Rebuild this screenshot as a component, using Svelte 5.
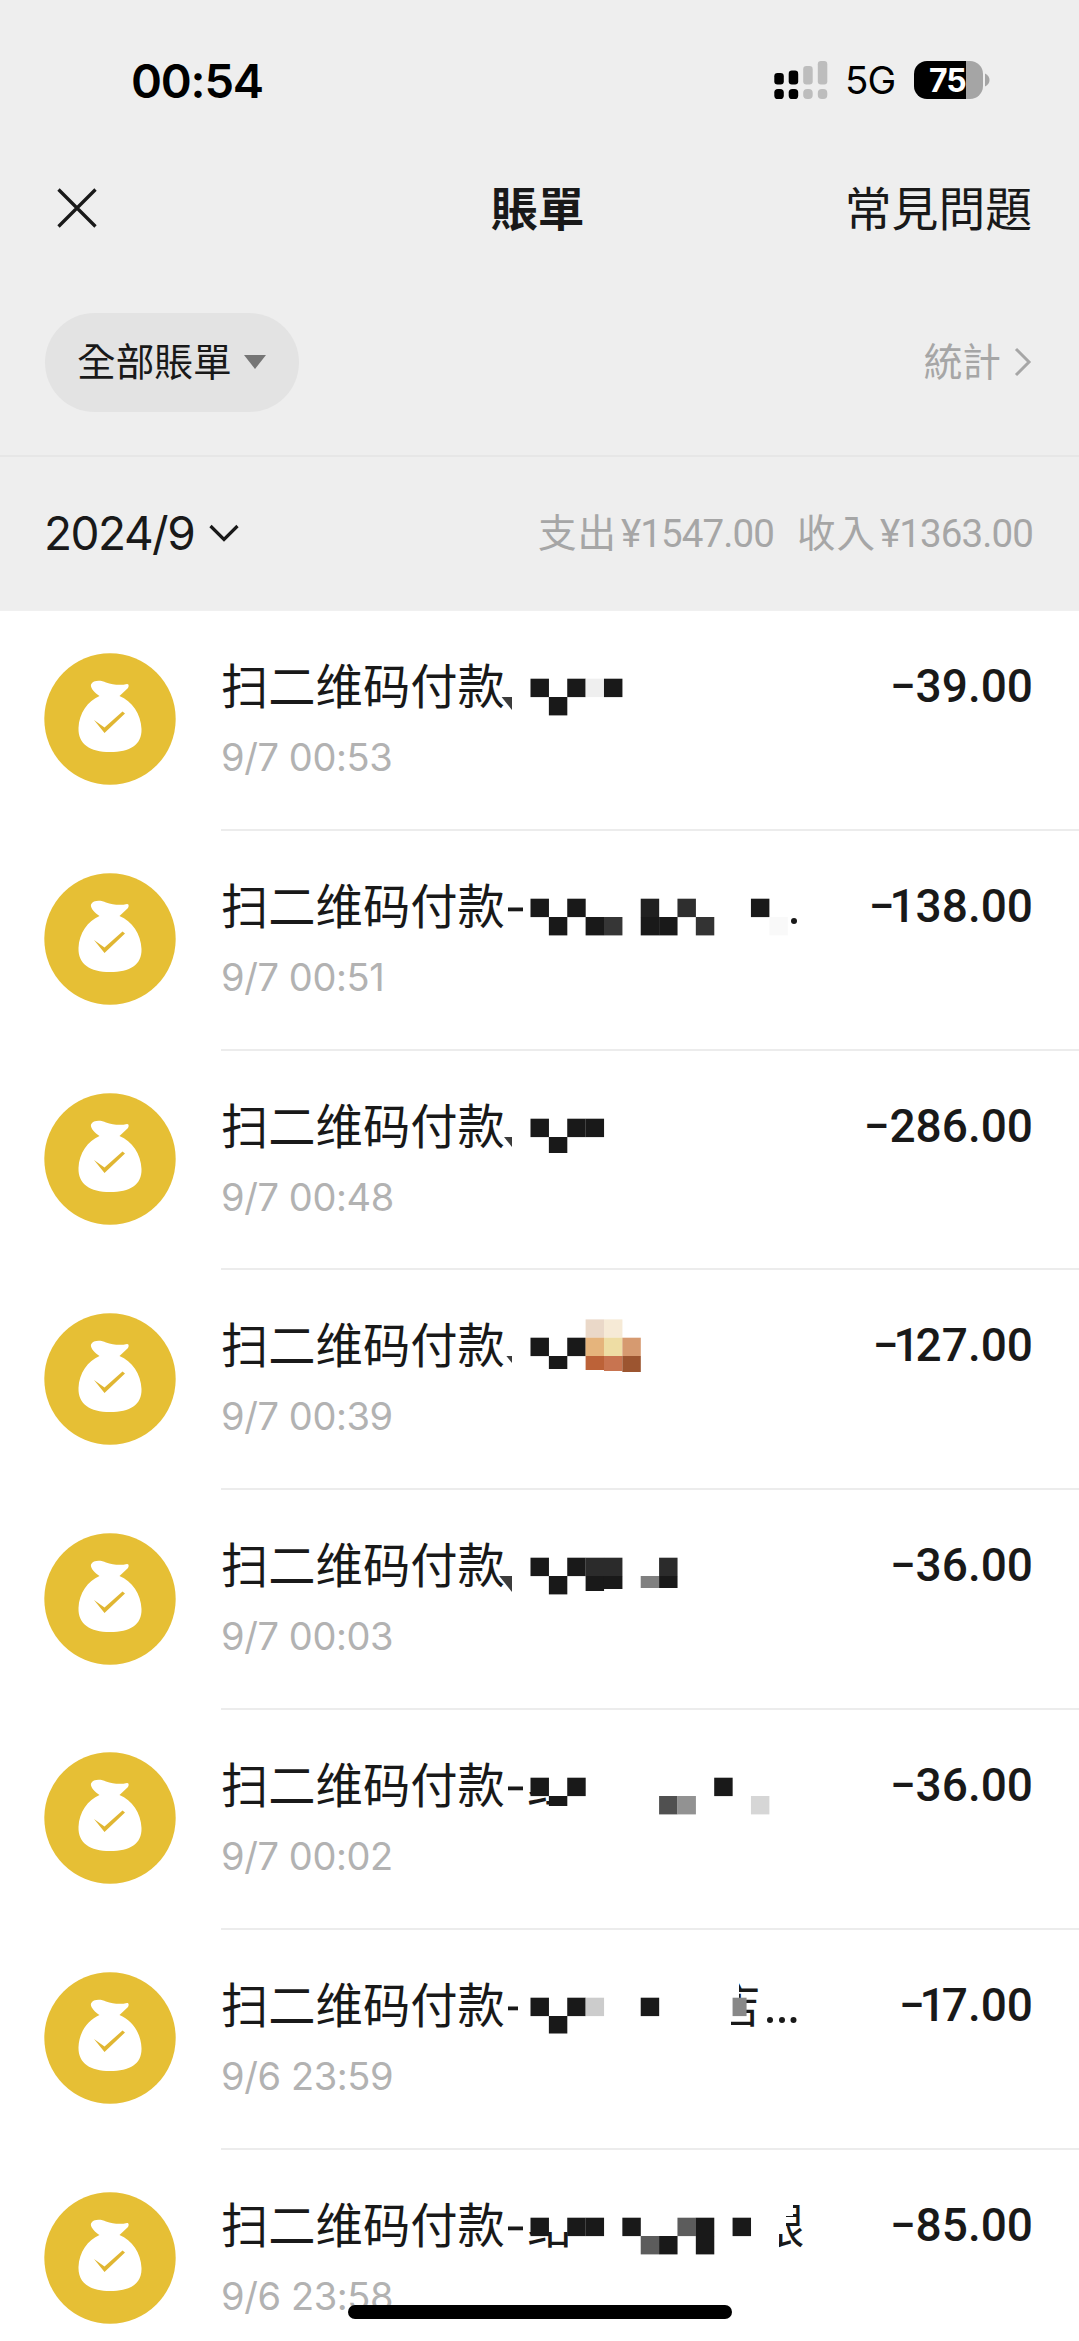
<script>
  const INK = '#191919';
  // Mosaic cells: [column, row, colour, height, width]
  const bills = [
    { title: '扫二维码付款', time: '9/7 00:53', amount: '−39.00', tick: 13,
      cells: [[0, 1], [1, 2], [2, 1], [3, 1, '#efefef'], [4, 1]] },
    { title: '扫二维码付款', dash: 15, time: '9/7 00:51', amount: '−138.00', dots: [294],
      cells: [[0, 1], [1, 2], [2, 1], [3, 2], [4, 2, '#363636'], [6, 1, '#202020'], [6, 2], [7, 2], [8, 1, '#2e2e2e'], [9, 2, '#333333'], [12, 1], [13, 2, '#f9f9f9']] },
    { title: '扫二维码付款', time: '9/7 00:48', amount: '−286.00', tick: 10,
      cells: [[0, 1], [1, 2, INK, 16], [2, 1], [3, 1]] },
    { title: '扫二维码付款', time: '9/7 00:39', amount: '−127.00', tick: 7,
      cells: [[0, 1], [1, 2, INK, 13], [2, 1], [3, 0, '#ead8c8'], [4, 0, '#f6ead6'], [3, 1, '#e5b47c'], [4, 1, '#eedda4'], [5, 1, '#d69a70'], [3, 2, '#bc6238', 14], [4, 2, '#c87450', 15], [5, 2, '#9c5530', 16]] },
    { title: '扫二维码付款', time: '9/7 00:03', amount: '−36.00', tick: 16,
      cells: [[0, 1], [1, 2], [2, 1], [3, 1, '#2b2b2b'], [4, 1, '#2b2b2b'], [3, 2, INK, 15], [4, 2, INK, 13], [6, 2, '#808080', 12], [7, 1, '#2b2b2b'], [7, 2, INK, 12]] },
    { title: '扫二维码付款', dash: 15, time: '9/7 00:02', amount: '−36.00', lower: '红', lowerCut: 49,
      cells: [[0, 1], [1, 2, INK, 10], [2, 1], [7, 2, '#505050'], [8, 2, '#929292'], [10, 1], [12, 2, '#d6d6d6']] },
    { title: '扫二维码付款', dash: 10, time: '9/6 23:59', amount: '−17.00', dots: [270, 282, 293.5], tail: '店', tailX: 213,
      tailMask: 'M210 12H239V42H235V54H231V78H210Z',
      cells: [[0, 1], [1, 2, INK, 17.5], [2, 1], [3, 1, '#cccccc'], [6, 1], [11, 1, '#888888', 18.4, 14]] },
    { title: '扫二维码付款', dash: 15, time: '9/6 23:58', amount: '−85.00', lower: '给', lowerCut: 68,
      tail: '银', tailX: 257, tailEnd: 303,
      tailMask: 'M254 12H293V36H286V54H279V78H254Z',
      cells: [[0, 1], [2, 1], [3, 1], [5, 1], [6, 2, '#5c5c5c'], [7, 2], [8, 1, '#5c5c5c'], [9, 1], [9, 2], [11, 1]] }
  ];
  const rowY = [19.4, 37.7, 56];
</script>

<div class="screen">
  <div class="top">
    <div class="status">
      <span class="clock">00:54</span>
      <div class="indicators">
        <svg class="signal" viewBox="0 0 54 38" width="54" height="38">
          <g fill="#000"><rect x="0.3" y="12" width="9.5" height="11.5" rx="3.2" /><rect x="14.7" y="9.5" width="9.5" height="14" rx="3.2" />
            <rect x="0.3" y="28" width="9.5" height="10" rx="3.6" /><rect x="14.7" y="28" width="9.5" height="10" rx="3.6" /></g>
          <g fill="#bdbdbd"><rect x="29.2" y="5" width="9.5" height="18.5" rx="3.2" /><rect x="43.8" y="0" width="9.5" height="23.5" rx="3.2" />
            <rect x="29.2" y="28" width="9.5" height="10" rx="4" /><rect x="43.8" y="28" width="9.5" height="10" rx="4" /></g>
        </svg>
        <span class="net">5G</span>
        <div class="battery"><span>75</span></div>
        <svg class="nub" viewBox="0 0 5 14" width="5" height="14"><path d="M0 0.5C6 3 6 11 0 13.500Z" fill="#a5a5a5" /></svg>
      </div>
    </div>

    <div class="nav">
      <svg class="close" viewBox="0 0 40 40" width="40" height="40"><path d="M1.500 1.500L38.500 38.500M38.500 1.500L1.500 38.500" stroke="#191919" stroke-width="3.300" fill="none" /></svg>
      <span class="heading">賬單</span>
      <span class="faq">常見問題</span>
    </div>

    <div class="filters">
      <div class="pill">
        <span>全部賬單</span>
        <svg viewBox="0 0 22 14" width="22" height="14"><path d="M0 0H22L11 14Z" fill="#757575" /></svg>
      </div>
      <div class="stats">
        <span>統計</span>
        <svg viewBox="0 0 18 30" width="18" height="30"><path d="M2 2L15 15L2 28" stroke="#a6a6a6" stroke-width="3" fill="none" /></svg>
      </div>
    </div>
  </div>

  <div class="month">
    <div class="date">
      <span>2024/9</span>
      <svg viewBox="0 0 30 18" width="30" height="18"><path d="M1.500 2L15 15.500L28.500 2" stroke="#191919" stroke-width="3.200" fill="none" /></svg>
    </div>
    <div class="totals">
      <span class="label">支出</span><span class="sum">¥1547.00</span>
      <span class="label second">收入</span><span class="sum">¥1363.00</span>
    </div>
  </div>

  <div class="list">
    {#each bills as bill}
      <div class="bill">
        <svg class="avatar" viewBox="0 0 132 132" width="132" height="132">
          <circle cx="66" cy="66" r="65.700" fill="#e6bf35" />
          <path fill="#fff" d="M55.500 43C51 40 46 35 47 31.500C49 27 57 27 62 29.500C69 32 77 32.500 83 31C85 31 85 33 84 35L75.500 43C88 48 97 61 97.500 76C98 92 86 99 66 99C46 99 34 91 34.500 75C35 60 44 48 55.500 43Z" />
          <path d="M50 67L60.500 74.500L78.500 58.500L81 60.500L60.500 80Z" fill="#e0b632" />
        </svg>
        <div class="body">
          <div class="info">
            <div class="title">
              <span class="name">{bill.title}</span>
              <svg class="mosaic" viewBox="0 0 320 90" width="320" height="90">
                {#if bill.dash}<rect x="8" y="46.500" width={bill.dash} height="3.800" fill={INK} />{/if}
                {#if bill.tick}<path d="M{12 - bill.tick * 0.8} 56H12V{56 + bill.tick}Z" fill="#3c3c3c" />{/if}
                {#if bill.lower}
                  <text x="27" y="62.500">{bill.lower}</text>
                  <rect x="27" y="16" width="52" height="36" fill="#fff" />
                  <rect x={bill.lowerCut} y="16" width="30" height="60" fill="#fff" />
                {/if}
                {#if bill.tail}
                  <text x={bill.tailX} y="62.500">{bill.tail}</text>
                  <path d={bill.tailMask} fill="#fff" />
                {/if}
                {#if bill.tailEnd}<rect x={bill.tailEnd} y="16" width="12" height="60" fill="#fff" />{/if}
                {#each bill.cells as [c, r, fill = INK, h = 18.4, w = 18.45]}
                  <rect x={30.5 + c * 18.37} y={rowY[r]} width={w} height={h} {fill} />
                {/each}
                {#each bill.dots ?? [] as x}<circle cx={x} cy="60" r="3" fill={INK} />{/each}
              </svg>
            </div>
            <div class="time">{bill.time}</div>
          </div>
          <span class="amount">{#each bill.amount.split('') as ch, i}<span class:before-one={bill.amount[i + 1] === '1'} class:one={ch === '1' && bill.amount[i + 1] !== '3'}>{ch}</span>{/each}</span>
        </div>
      </div>
    {/each}
  </div>
  <div class="home"></div>
</div>

<style>
  :global(body) { background: #fff; }
  .screen {
    position: relative;
    width: 1079px;
    height: 2341px;
    overflow: hidden;
    background: #fff;
    color: #191919;
    font-family: Inter, 'Noto Sans CJK TC', sans-serif;
  }
  svg { display: block; flex: none; }
  span { white-space: nowrap; }
  .top { height: 457px; background: #eee; border-bottom: 2px solid #e6e6e6; box-sizing: border-box; }
  .status {
    display: flex;
    justify-content: space-between;
    align-items: center;
    height: 160px;
    padding: 0 89px 0 131px;
    color: #000;
  }
  .clock { font-size: 47px; font-weight: 600; letter-spacing: -1.200px; }
  .indicators { display: flex; align-items: center; }
  .net { margin-left: 17px; width: 69px; font-size: 38.500px; letter-spacing: -1px; }
  .battery {
    width: 69px;
    height: 38px;
    border-radius: 13px;
    background: linear-gradient(90deg, #000 52px, #a5a5a5 52px);
    color: #fff;
    font-size: 32px;
    font-weight: 700;
    line-height: 39px;
    letter-spacing: -1px;
    padding-left: 15px;
    box-sizing: border-box;
  }
  .nub { margin-left: 2px; }
  .nav {
    display: grid;
    grid-template-columns: 434px auto 1fr;
    align-items: center;
    height: 95px;
    padding: 0 47px 0 57px;
    font-family: 'Noto Sans CJK TC', sans-serif;
    font-size: 46.800px;
  }
  .nav span { padding-bottom: 5px; }
  .heading { font-weight: 700; }
  .faq { justify-self: end; }
  .filters {
    display: flex;
    justify-content: space-between;
    align-items: center;
    height: 100px;
    padding: 57px 47px 0 45px;
    font-family: 'Noto Sans CJK TC', sans-serif;
    font-size: 38.700px;
  }
  .filters span { padding-bottom: 6px; }
  .pill {
    display: flex;
    align-items: center;
    gap: 12px;
    width: 254px;
    height: 99px;
    padding-left: 32px;
    box-sizing: border-box;
    border-radius: 50px;
    background: #e3e3e3;
  }
  .stats { display: flex; align-items: center; gap: 13px; color: #a6a6a6; }
  .month {
    display: flex;
    justify-content: space-between;
    align-items: center;
    height: 153px;
    padding: 0 46px 2px 44px;
    background: #eee;
    box-sizing: border-box;
  }
  .date { display: flex; align-items: center; gap: 15px; font-size: 46px; letter-spacing: -1.500px; }
  .totals { display: flex; align-items: baseline; color: #a6a6a6; font-size: 38.500px; padding-bottom: 6px; }
  .label { letter-spacing: 1px; margin-right: 4px; }
  .second { margin-left: 23px; }
  .sum { font-family: Roboto, sans-serif; letter-spacing: -0.900px; }
  .list { border-top: 1px solid #f0f0f0; }
  .bill { display: flex; align-items: center; height: 219.800px; padding-left: 44px; gap: 45px; }
  .avatar { margin-top: -3px; }
  .body {
    flex: 1;
    display: flex;
    align-self: stretch;
    justify-content: space-between;
    border-bottom: 2px solid #ececec;
    padding-right: 46px;
  }
  .info { width: 600px; padding-top: 30px; }
  .title { display: flex; height: 90px; font-family: 'Noto Sans CJK SC', sans-serif; font-size: 47.300px; line-height: 86px; }
  .name { width: 279px; }
  .mosaic { overflow: visible; }
  .mosaic text { fill: #191919; font-size: 47.300px; }
  .time { margin-top: 2px; font-size: 38px; line-height: 48px; letter-spacing: -0.400px; color: #b2b2b2; }
  .amount { font-family: Roboto, sans-serif; font-size: 46px; font-weight: 500; line-height: 54px; margin-top: 48px; }
  .before-one { letter-spacing: -5px; }
  .one { letter-spacing: -4px; }
  .home {
    position: absolute;
    left: 348px;
    top: 2305px;
    width: 384px;
    height: 14px;
    border-radius: 7px;
    background: #000;
  }
</style>
